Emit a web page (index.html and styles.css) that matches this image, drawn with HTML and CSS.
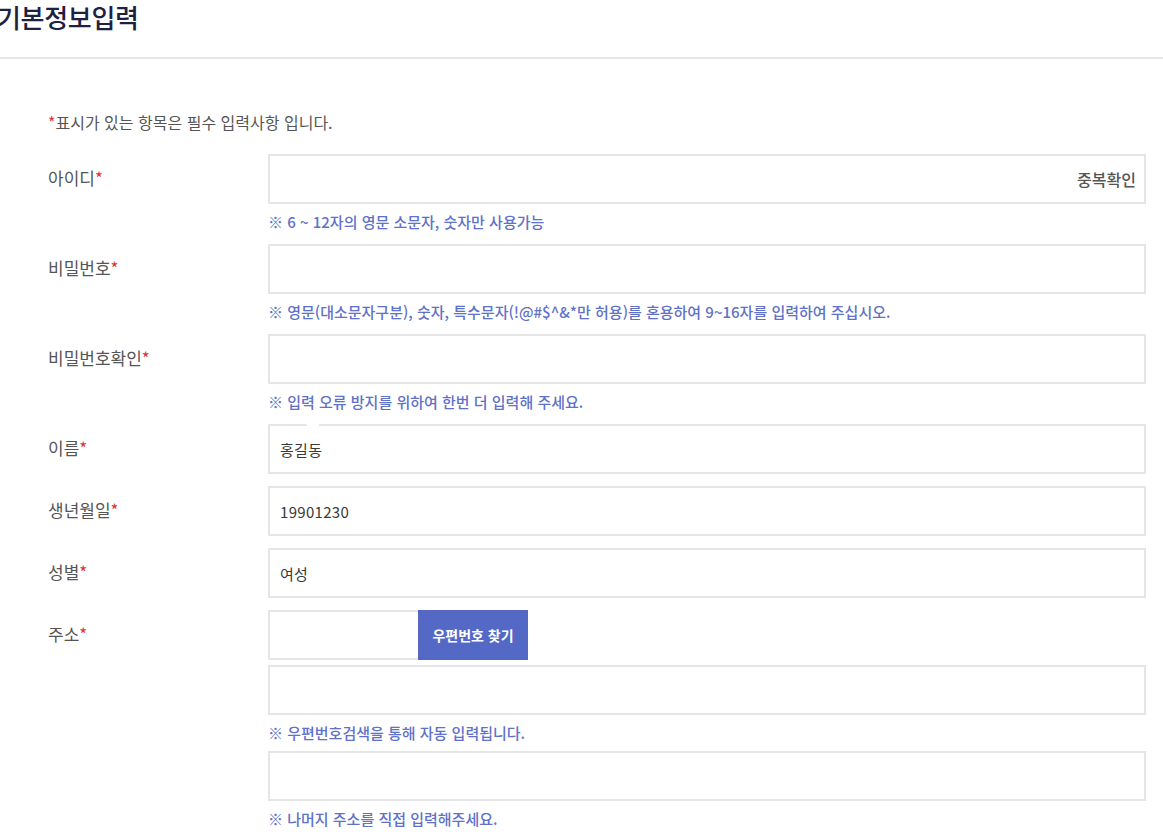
FILE: index.html
```html
<!DOCTYPE html>
<html lang="ko">
<head>
<meta charset="utf-8">
<title>기본정보입력</title>
<link rel="stylesheet" href="styles.css">
</head>
<body>
<header class="page-head">
  <h2 class="page-title">기본정보입력</h2>
</header>
<section class="form-wrap">
  <p class="req-note"><span class="star">*</span>표시가 있는 항목은 필수 입력사항 입니다.</p>
  <div class="form">
    <div class="row">
      <div class="label">아이디<span class="star">*</span></div>
      <div class="field">
        <div class="box box-id"><span class="box-btn">중복확인</span></div>
        <p class="hint">※ 6 ~ 12자의 영문 소문자, 숫자만 사용가능</p>
      </div>
    </div>
    <div class="row">
      <div class="label">비밀번호<span class="star">*</span></div>
      <div class="field">
        <div class="box"></div>
        <p class="hint">※ 영문(대소문자구분), 숫자, 특수문자(!@#$^&amp;*만 허용)를 혼용하여 9~16자를 입력하여 주십시오.</p>
      </div>
    </div>
    <div class="row">
      <div class="label">비밀번호확인<span class="star">*</span></div>
      <div class="field">
        <div class="box"></div>
        <p class="hint">※ 입력 오류 방지를 위하여 한번 더 입력해 주세요.</p>
      </div>
    </div>
    <div class="row">
      <div class="label">이름<span class="star">*</span></div>
      <div class="field">
        <div class="box box-name"><span class="value">홍길동</span><span class="notch"></span></div>
      </div>
    </div>
    <div class="row">
      <div class="label">생년월일<span class="star">*</span></div>
      <div class="field">
        <div class="box"><span class="value">19901230</span></div>
      </div>
    </div>
    <div class="row">
      <div class="label">성별<span class="star">*</span></div>
      <div class="field">
        <div class="box"><span class="value">여성</span></div>
      </div>
    </div>
    <div class="row">
      <div class="label">주소<span class="star">*</span></div>
      <div class="field">
        <div class="post-row">
          <div class="box box-post"></div>
          <button class="post-btn" type="button">우편번호 찾기</button>
        </div>
        <div class="box box-addr1"></div>
        <p class="hint">※ 우편번호검색을 통해 자동 입력됩니다.</p>
        <div class="box box-addr2"></div>
        <p class="hint">※ 나머지 주소를 직접 입력해주세요.</p>
      </div>
    </div>
  </div>
</section>
</body>
</html>
```

FILE: styles.css
```css
* { box-sizing: border-box; }

html, body {
  margin: 0;
  padding: 0;
  background: #ffffff;
}

body {
  font-family: "Noto Sans CJK KR", "Noto Sans", sans-serif;
  color: #555555;
  width: 1163px;
  overflow: hidden;
}

.page-head {
  height: 59px;
  border-bottom: 2px solid #e6e6e6;
}

.page-title {
  margin: 0;
  padding: 0;
  font-size: 26px;
  line-height: 34px;
  font-weight: 500;
  color: #1d2142;
  text-indent: -3px;
  letter-spacing: -0.3px;
}

.form-wrap {
  padding: 0 17px 0 48px;
}

.req-note {
  margin: 53px 0 22px;
  font-size: 16px;
  line-height: 20px;
  color: #555555;
}

.star {
  color: #e0323a;
}

.form {
  display: flex;
  flex-direction: column;
  gap: 12px;
}

.row {
  display: grid;
  grid-template-columns: 220px 1fr;
}

.label {
  height: 50px;
  line-height: 48px;
  font-size: 17px;
  color: #555555;
}

.field {
  display: flex;
  flex-direction: column;
}

.box {
  position: relative;
  height: 50px;
  border: 2px solid #e5e5e5;
  background: #ffffff;
  display: flex;
  align-items: center;
  padding: 0 10px;
}

.box-id {
  justify-content: flex-end;
  padding-right: 8px;
}

.box-btn {
  font-size: 16px;
  font-weight: 500;
  color: #555555;
}

.value {
  font-size: 15px;
  color: #3a3a3a;
  letter-spacing: 0.3px;
}

.notch {
  position: absolute;
  top: -4px;
  left: 35px;
  width: 16px;
  height: 6px;
  background: #ffffff;
  clip-path: polygon(0 0, 100% 0, 75% 100%, 25% 100%);
}

.hint {
  margin: 8px 0 0;
  line-height: 20px;
  font-size: 15px;
  font-weight: 500;
  color: #6071c8;
}

.post-row {
  display: flex;
  height: 50px;
}

.box-post {
  width: 150px;
  border-right: none;
}

.post-btn {
  width: 110px;
  height: 50px;
  border: none;
  margin: 0;
  padding: 0;
  background: #5468c6;
  color: #ffffff;
  font-family: "Noto Sans CJK KR", "Noto Sans", sans-serif;
  font-size: 14px;
  font-weight: 700;
  cursor: pointer;
}

.box-addr1 {
  margin-top: 5px;
}

.box-addr2 {
  margin-top: 8px;
}
```
